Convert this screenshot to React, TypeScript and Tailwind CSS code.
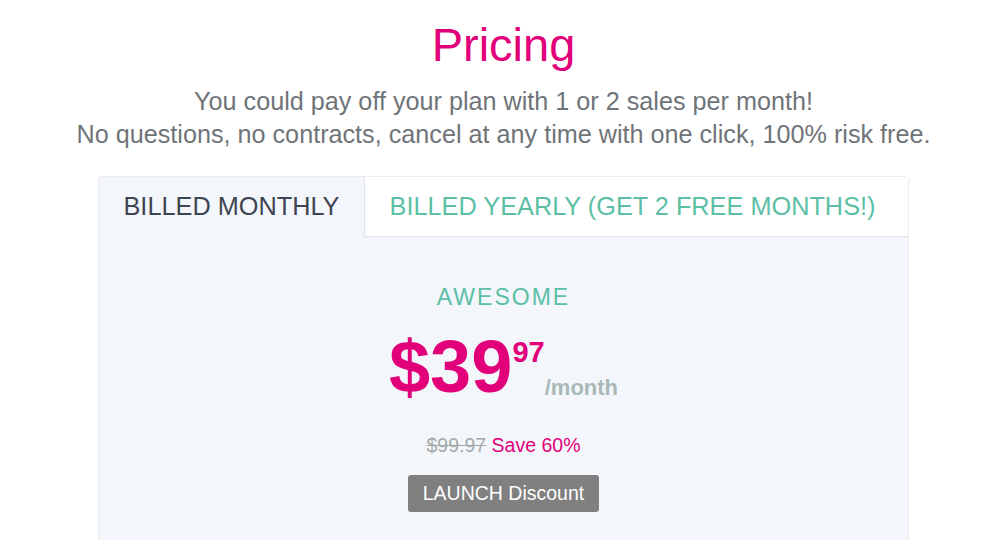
import { useState } from 'react'

export default function App() {
  const [tab, setTab] = useState<'monthly' | 'yearly'>('monthly')

  return (
    <div className="min-h-screen bg-white pl-[18px]" style={{ fontFamily: '"Liberation Sans", Arial, sans-serif' }}>
      <div className="text-center pt-[16px]">
        <h1 className="text-[47px] leading-[58px] text-[#e2007a]">Pricing</h1>
        <p className="mt-[11px] text-[25.2px] leading-[33px] text-[#6f7479]">
          You could pay off your plan with 1 or 2 sales per month!
          <br />
          No questions, no contracts, cancel at any time with one click, 100% risk free.
        </p>
      </div>

      {/* Plans */}
      <div className="mx-auto mt-[25px] w-[811px] border border-[#ececef] border-b-0 rounded-t">
        <div className="flex">
          <button
            onClick={() => setTab('monthly')}
            className={`w-[265px] h-[60px] text-[25.3px] rounded-tl ${
              tab === 'monthly' ? 'bg-[#f3f6fb] text-[#3f4452]' : 'bg-white text-[#5cbfa5] border-b border-[#dfe3ea]'
            }`}
          >
            BILLED MONTHLY
          </button>
          <button
            onClick={() => setTab('yearly')}
            className={`flex-1 h-[60px] pr-[8px] text-[25.3px] border-l border-[#dfe3ea] ${
              tab === 'yearly' ? 'bg-[#f3f6fb] text-[#3f4452]' : 'bg-white text-[#5cbfa5] border-b'
            }`}
          >
            BILLED YEARLY (GET 2 FREE MONTHS!)
          </button>
        </div>

        <div className="bg-[#f3f6fb] pt-[47px] pb-[40px] flex flex-col items-center">
          <div className="text-[23px] leading-[26px] tracking-[2px] text-[#5cbfa5]">AWESOME</div>
          <div className="mt-[20px] flex items-end">
            <span className="text-[74px] leading-[74px] font-bold text-[#e2007a]">$39</span>
            <span className="self-start mt-[8px] text-[29px] leading-[29px] font-bold text-[#e2007a]">97</span>
            <span className="mb-[5px] text-[22px] leading-[22px] font-bold text-[#a9b9b8]">/month</span>
          </div>
          <div className="mt-[29px] text-[19.5px] leading-[24px]">
            <span className="line-through text-[#a2aaaa]">$99.97</span>{' '}
            <span className="text-[#e2007a]">Save 60%</span>
          </div>
          <div className="mt-[18px] bg-[#808080] text-white text-[19.5px] leading-[37px] px-[15px] rounded-[3px]">
            LAUNCH Discount
          </div>
        </div>
      </div>
    </div>
  )
}
